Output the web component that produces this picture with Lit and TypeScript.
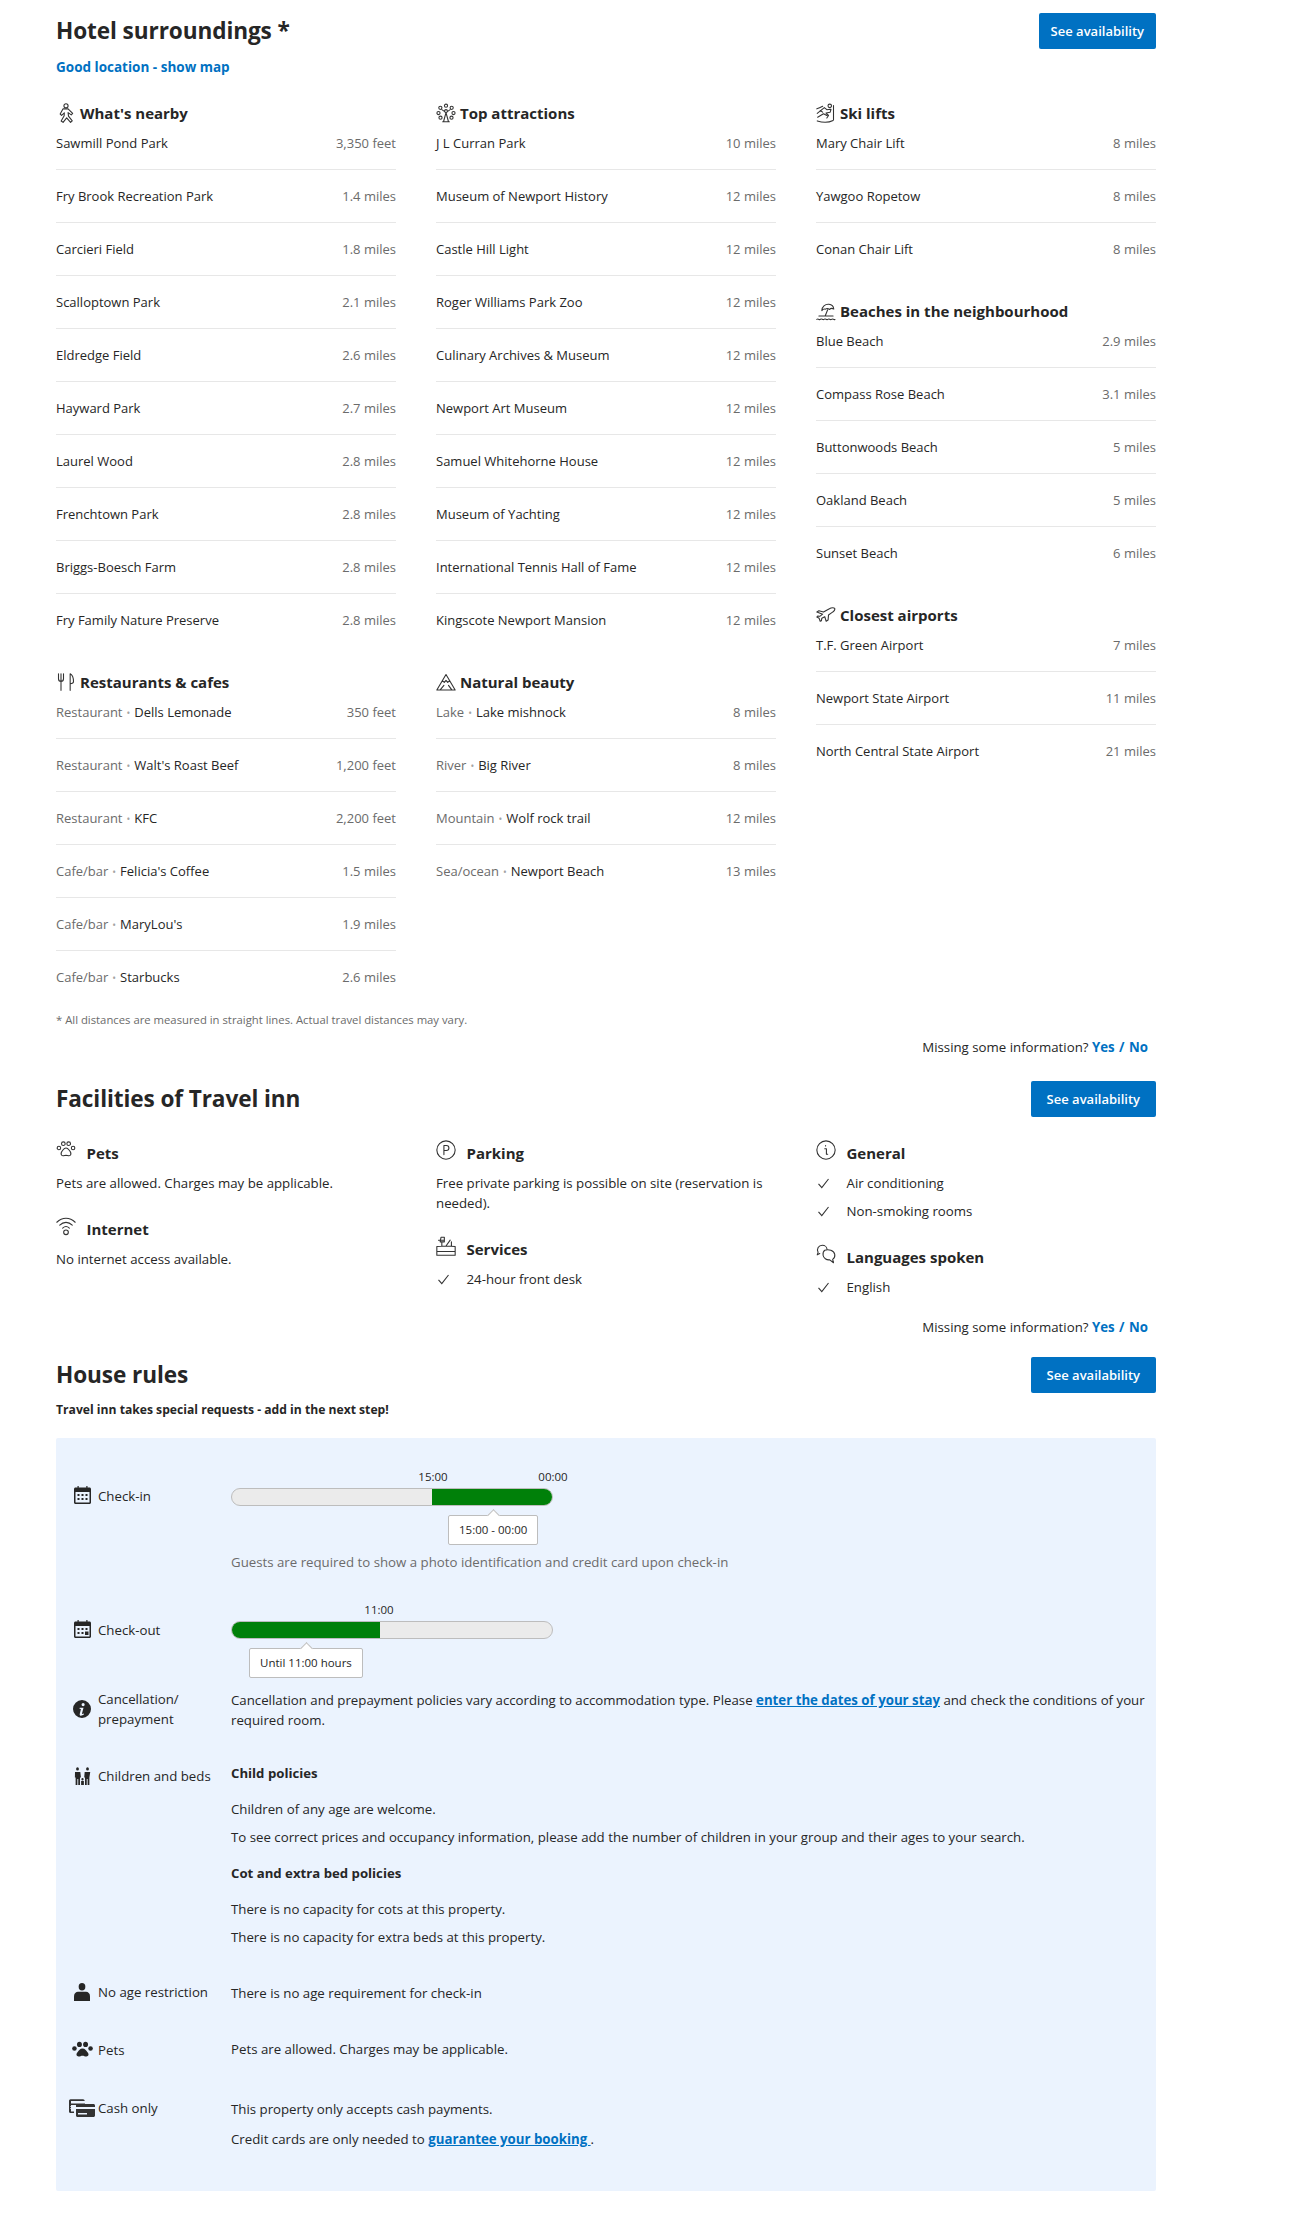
import { LitElement, html, css, svg } from "lit";
import { customElement } from "lit/decorators.js";

const line = (body: any, size = 20, box = 24) => html`<svg class="ic" width=${size} height=${size} viewBox="0 0 ${box} ${box}" fill="none" stroke="#333" stroke-width="1.3" stroke-linecap="round" stroke-linejoin="round">${body}</svg>`;
const solid = (body: any, w = 18, h = 18, vw = 24, vh = 24) => html`<svg class="ic" width=${w} height=${h} viewBox="0 0 ${vw} ${vh}" preserveAspectRatio="none" fill="#262626">${body}</svg>`;

const I = {
  walk: line(svg`<circle cx="12" cy="3.300" r="2.500"/><path d="M8.500 7h6l5.500 5.500-1.700 1.700-3.800-2.700.5 4.300 4.500 5.700-2 1.800-4.700-5.500-4.300 5.500-2.300-1.700 3.600-6.300.2-3.500-3.300 3-1.700-1.600z"/>`),
  wheel: line(svg`<circle cx="12" cy="3.200" r="1.900"/><circle cx="5.200" cy="5.800" r="1.900"/><circle cx="18.800" cy="5.800" r="1.900"/><circle cx="3" cy="12" r="1.900"/><circle cx="21" cy="12" r="1.900"/><circle cx="5.400" cy="17.600" r="1.900"/><circle cx="18.600" cy="17.600" r="1.900"/><circle cx="12" cy="9.600" r="1.700"/><path d="M9 22.500l3-11 3 11zM8 22.500h8M7 8l3 2M17 8l-3 2"/>`),
  ski: line(svg`<circle cx="16.500" cy="3.400" r="2.100"/><path d="M1.500 12.500L10 5.500 13 8l5-.5-1 3.500-5 1 3 3-2 3M2 17l7-4 4 2M21 3v17M1 7c3-1 5-2 7-3M1.500 21.500c6 2 14 2 19-.5M5 9l3 2"/>`),
  beach: line(svg`<path d="M7 11.500C7 7 11 3.500 15.500 4c3.500.4 5.500 3 5.800 5.600-2.200-1.300-4-.7-5 .6-1.600-1.400-3.500-1.600-5-.4-1.600-.6-3-.1-4.300 1.700zM14 10.500l-3 7.500M3.500 18h17"/><path d="M1 22c1.800-1.200 2.400 1.200 4.400 0s2.600 1.200 4.400 0 2.600 1.200 4.400 0 2.600 1.200 4.400 0 2.600 1.200 4.400 0" stroke-dasharray="2 .6"/>`),
  plane: line(svg`<path d="M1 8.500l2.500-1.500 5.500 1.500 6-3.500c2.500-1.300 6-2 7.500-1 .5 1.500-1 3.500-3.500 5.200L15 12l-.5 6-2.300 1.500-1.700-5.500-3.500 1.800-.5 3-1.500.7-1.200-3.500L1 14.500l1-1.200 2.500.3L8 11z"/>`),
  fork: line(svg`<path d="M3 2v6c0 2 1.200 3.200 3 3.200S9 10 9 8V2M6 2v20M17 22V2c3 1.500 4 6 4 9.500 0 1.600-1.500 2.500-4 2.500"/>`),
  mountain: line(svg`<path d="M1 21.500L12 3l11 18.500zM7.600 10.500l2.400 2 2-2.500 2 2.500 2.400-2M5 21.500l4.500-5.500M19 21.500L15 16"/>`),
  paw: line(svg`<circle cx="8.800" cy="4.400" r="2.200"/><circle cx="15.200" cy="4.400" r="2.200"/><circle cx="3.500" cy="9.600" r="2.100"/><circle cx="20.500" cy="9.600" r="2.100"/><path d="M12 9.500c-2.400 0-3.200 2-4.400 3.400C6.200 14.600 5.400 16 6.600 18c1.400 1.800 3.600.4 5.400.4s4 1.400 5.400-.4c1.200-2 .4-3.400-1-5.100C15.200 11.500 14.400 9.500 12 9.500z"/>`),
  p: line(svg`<circle cx="12" cy="12" r="11"/><path d="M9.500 17.500V6.500h3c2 0 3 1.200 3 3s-1 3-3 3h-3"/>`),
  info: line(svg`<circle cx="12" cy="12" r="11"/><path d="M10.500 10.500h2v6.500h1.500M11.500 6.700v.5"/>`),
  wifi: line(svg`<path d="M1 7.500C7.500 1.200 16.500 1.200 23 7.500M4.500 11C9 6.500 15 6.500 19.500 11M8 14.500c2.400-2.200 5.600-2.200 8 0"/><circle cx="12" cy="19.500" r="2.800"/>`),
  desk: line(svg`<path d="M1 23V12.500l5.500-.2h11l5.500.2V23zM1 18.500h22M7 12V8M12 12l5-7M6 1.500h4V7H5zM3 5h7M18.500 12V7"/>`),
  chat: line(svg`<path d="M2.500 10C.5 6 3 1.500 7.500 1.500c3.500 0 5.600 2.500 5.700 4.800M2.500 10L1.500 13l3-1.500"/><path d="M10.500 7.500c4.500-1.500 11 0 12 5 .5 3-1 5-2.500 6l1 4-4.500-3.500c-4 .5-7.500-2-8-5.500-.3-2.500.5-5 2-6z"/>`),
  check: html`<svg class="ic" width="11" height="11" viewBox="0 0 11 11" fill="none" stroke="#333" stroke-width="1.100"><path d="M.5 5.800L3.800 9.700 10.500 1"/></svg>`,
  cal: (back = false) => html`<svg class="ic cal" width="17" height="18" viewBox="0 0 17 18" fill="#262626"><path fill-rule="evenodd" d="M3.500 0h1.200v1.500h7.600V0h1.200v1.500H15.500c.8 0 1.500.7 1.500 1.500v13.500c0 .8-.7 1.500-1.500 1.500h-14C.7 18 0 17.300 0 16.500V3c0-.8.7-1.500 1.500-1.500h2zM1.500 6v10.500h14V6z"/><path d="M3.500 8h2v2h-2zM7.500 8h2v2h-2zM11.500 8h2v2h-2zM3.500 12h2v2h-2zM7.500 12h2v2h-2z"/><path d=${back ? "M11 11.500h3.500v3.500H11z" : "M11.500 12h2v2h-2z"}/></svg>`,
  infoSolid: solid(svg`<path fill-rule="evenodd" d="M12 0a12 12 0 1 1 0 24 12 12 0 0 1 0-24zM13.500 4a2 2 0 1 0 0 4.200 2 2 0 0 0 0-4.200zM9 10.200l-.4 1.500 2 .3-1.600 6.500c-.4 2 1 2.700 2.500 2.300 1.500-.3 2.500-1 3.200-1.700l-.4-1.200-1.900.6c-.4 0-.5-.3-.3-1l1.900-7.200z"/>`),
  family: solid(svg`<circle cx="4" cy="2.500" r="2.300"/><circle cx="20" cy="2.500" r="2.300"/><path d="M0 6.500h8.500l1 7.500H8v10H5.200v-8H3.800v8H1V14H-.2zM15.500 6.500H24.400L23 14v10h-2.800v-8h-1.400v8H16V14h-1.300zM12 14.500a1.800 1.800 0 1 1 0 3.600 1.800 1.800 0 0 1 0-3.600zM9.800 18.800h4.400V24H9.800z"/>`, 15, 18),
  person: solid(svg`<circle cx="12" cy="5" r="5"/><path d="M0 24v-6.500C0 13.500 3 11.500 6 11.500h12c3 0 6 2 6 6V24z"/>`, 16, 18),
  pawSolid: solid(svg`<ellipse cx="8.500" cy="4.500" rx="2.800" ry="3.500"/><ellipse cx="15.500" cy="4.500" rx="2.800" ry="3.500"/><ellipse cx="2.800" cy="10" rx="2.600" ry="2.900"/><ellipse cx="21.200" cy="10" rx="2.600" ry="2.900"/><path d="M12 10c-3 0-4 2.500-5.500 4.500C5 16.500 4.500 18.500 6 20c1.800 1.500 4-.5 6-.5s4.200 2 6 .5c1.500-1.500 1-3.500-.5-5.500C16 12.500 15 10 12 10z"/>`, 21, 18),
  cards: html`<svg class="ic" width="26" height="18" viewBox="0 0 26 18" fill="#333"><path d="M0 2c0-1 .7-1.700 1.500-1.700H14c1 0 1.700.7 1.700 1.700H2v2.500h14V6H2v6.500h3V14H1.500C.6 14 0 13.400 0 12.500z"/><path d="M1 7.500h3M1 9.500h3" stroke="#ebf2fd" stroke-width=".6"/><path d="M7 6.500c0-1 .7-1.500 1.500-1.500h16c.8 0 1.500.6 1.500 1.500V8H7zM7 10h19v6.500c0 .8-.7 1.500-1.500 1.500h-16C7.700 18 7 17.300 7 16.500zM9 14v1.500h9V14z" fill-rule="evenodd"/></svg>`,
};

type Row = { n: string; d: string; c?: string };
type Group = { icon: any; title: string; rows: Row[] };
const r = (n: string, d: string, c?: string): Row => ({ n, d, c });
const columns: Group[][] = [
  [
    { icon: I.walk, title: "What's nearby", rows: [r("Sawmill Pond Park", "3,350 feet"), r("Fry Brook Recreation Park", "1.4 miles"), r("Carcieri Field", "1.8 miles"), r("Scalloptown Park", "2.1 miles"), r("Eldredge Field", "2.6 miles"), r("Hayward Park", "2.7 miles"), r("Laurel Wood", "2.8 miles"), r("Frenchtown Park", "2.8 miles"), r("Briggs-Boesch Farm", "2.8 miles"), r("Fry Family Nature Preserve", "2.8 miles")] },
    { icon: I.fork, title: "Restaurants & cafes", rows: [r("Dells Lemonade", "350 feet", "Restaurant"), r("Walt's Roast Beef", "1,200 feet", "Restaurant"), r("KFC", "2,200 feet", "Restaurant"), r("Felicia's Coffee", "1.5 miles", "Cafe/bar"), r("MaryLou's", "1.9 miles", "Cafe/bar"), r("Starbucks", "2.6 miles", "Cafe/bar")] },
  ],
  [
    { icon: I.wheel, title: "Top attractions", rows: [r("J L Curran Park", "10 miles"), r("Museum of Newport History", "12 miles"), r("Castle Hill Light", "12 miles"), r("Roger Williams Park Zoo", "12 miles"), r("Culinary Archives & Museum", "12 miles"), r("Newport Art Museum", "12 miles"), r("Samuel Whitehorne House", "12 miles"), r("Museum of Yachting", "12 miles"), r("International Tennis Hall of Fame", "12 miles"), r("Kingscote Newport Mansion", "12 miles")] },
    { icon: I.mountain, title: "Natural beauty", rows: [r("Lake mishnock", "8 miles", "Lake"), r("Big River", "8 miles", "River"), r("Wolf rock trail", "12 miles", "Mountain"), r("Newport Beach", "13 miles", "Sea/ocean")] },
  ],
  [
    { icon: I.ski, title: "Ski lifts", rows: [r("Mary Chair Lift", "8 miles"), r("Yawgoo Ropetow", "8 miles"), r("Conan Chair Lift", "8 miles")] },
    { icon: I.beach, title: "Beaches in the neighbourhood", rows: [r("Blue Beach", "2.9 miles"), r("Compass Rose Beach", "3.1 miles"), r("Buttonwoods Beach", "5 miles"), r("Oakland Beach", "5 miles"), r("Sunset Beach", "6 miles")] },
    { icon: I.plane, title: "Closest airports", rows: [r("T.F. Green Airport", "7 miles"), r("Newport State Airport", "11 miles"), r("North Central State Airport", "21 miles")] },
  ],
];

@customElement("app-root")
export class AppRoot extends LitElement {
  static styles = css`
    :host { display: block; width: 1314px; min-height: 2213px; background: #fff; color: #262626; font-family: "Open Sans", "Noto Sans", sans-serif; font-size: 13.25px; line-height: 20px; }
    * { box-sizing: border-box; }
    .ic { display: block; flex-shrink: 0; overflow: visible; }
    .page { width: 1100px; margin-left: 56px; padding-top: 13px; }
    .head { display: flex; justify-content: space-between; align-items: center; }
    h2 { margin: 0; font-size: 22.6px; line-height: 36px; font-weight: 700; letter-spacing: -0.1px; }
    .btn { display: flex; align-items: center; height: 36px; padding: 0 12px; background: #0071c2; color: #fff; border-radius: 2px; font-weight: 600; font-size: 13px; }
    .btn.wide { padding: 0 16px; }
    .loc { margin-top: 8px; color: #0071c2; font-weight: 700; font-size: 13.5px; }
    .grid { display: grid; grid-template-columns: repeat(3, 340px); column-gap: 40px; }
    .surround { margin-top: 24px; font-size: 13px; }
    .group { margin-bottom: 24px; }
    .group:last-child { margin-bottom: 0; }
    h3 { margin: 0 0 8px; display: flex; align-items: center; gap: 4px; height: 24px; font-size: 15px; font-weight: 700; line-height: 24px; }
    .row { display: flex; justify-content: space-between; padding: 16px 0; border-bottom: 1px solid #e7e7e7; }
    .row:first-of-type { padding-top: 0; }
    .row:last-child { border-bottom: none; }
    .dist, .cat { color: #6b6b6b; }
    .dot { color: #a3a3a3; margin: 0 4px; font-size: 10px; line-height: 0; }
    .note { margin-top: 9px; font-size: 11.3px; line-height: 16px; color: #6b6b6b; }
    .missing { margin-top: 9px; padding-right: 8px; text-align: right; }
    .missing b { color: #0071c2; font-weight: 700; }
    .missing .slash { margin: 0 1px; }
    .facilities { margin-top: 24px; }
    .head.fac { margin-top: 24px; }
    .fgroup { margin-bottom: 24px; }
    .fgroup:last-child { margin-bottom: 0; }
    h4 { margin: 0 0 8px; display: flex; align-items: center; height: 24px; font-size: 15px; font-weight: 700; }
    h4 .slot { width: 30.5px; flex-shrink: 0; margin-top: -6px; }
    .item { display: flex; align-items: center; }
    .item + .item { margin-top: 8px; }
    .item .chk { width: 30.5px; padding-left: 2px; flex-shrink: 0; }
    .miss2 { margin-top: 20px; }
    .head.rules { margin-top: 20px; }
    .sub { margin-top: 7px; font-weight: 700; font-size: 12.15px; }
    .panel { margin-top: 18px; height: 753px; padding-top: 31px; background: #ebf3fe; border-radius: 2px; }
    .rule { display: flex; }
    .lab { width: 175px; flex-shrink: 0; display: flex; align-items: center; }
    .slot2 { width: 24px; margin: 0 4px 0 14px; flex-shrink: 0; display: flex; justify-content: center; }
    .slot2 .ic { margin: 0 -2px; }
    .slot2 .cal { margin-top: -2px; }
    .lab.a { height: 20px; margin-top: 17px; }
    .r-out .lab.a { margin-top: 18px; }
    .body { flex: 1; min-width: 0; }
    .scale { position: relative; height: 16px; width: 322px; font-size: 11.5px; line-height: 16px; }
    .scale span { position: absolute; top: 0; transform: translateX(-50%); }
    .bar { position: relative; margin-top: 3px; width: 322px; height: 18px; background: #ebebeb; border: 1px solid #bdbdbd; border-radius: 9px; overflow: hidden; }
    .fill { position: absolute; top: -1px; bottom: -1px; background: #008009; }
    .tipwrap { display: block; height: 39px; }
    .tip { position: relative; display: inline-flex; align-items: center; height: 30px; margin-top: 9px; padding: 0 10px; background: #fff; border: 1px solid #bdbdbd; border-radius: 2px; font-size: 11.5px; }
    .tip::before { content: ""; position: absolute; left: 50%; top: -5px; width: 8px; height: 8px; margin-left: -4px; background: #fff; border-left: 1px solid #bdbdbd; border-top: 1px solid #bdbdbd; transform: rotate(45deg); }
    .guest { margin-top: 7px; color: #6b6b6b; }
    .r-out { margin-top: 30px; }
    .r-can { margin-top: 12px; }
    .r-can .lab { margin-top: -1px; height: 40px; }
    .r-kids { margin-top: 33px; }
    .r-kids .lab, .r-age .lab, .r-pets .lab, .r-cash .lab { height: 20px; }
    .r-kids .lab { margin-top: 3px; }
    .r-age { margin-top: 36px; }
    .r-age .lab { margin-top: -1px; }
    .r-pets { margin-top: 36px; }
    .r-pets .lab { margin-top: 1px; }
    .r-cash { margin-top: 39px; }
    .r-cash .lab { margin-top: -1px; }
    .body p { margin: 0; }
    .body p.t { font-weight: 700; font-size: 13.2px; }
    .body p.mt8 { margin-top: 8px; }
    .body p.mt10 { margin-top: 10px; }
    .body p.mt16 { margin-top: 16px; }
    a { color: #0071c2; font-weight: 700; text-decoration: underline; }
  `;

  private group(g: Group) {
    return html`<div class="group">
      <h3>${g.icon}<span>${g.title}</span></h3>
      ${g.rows.map((x) => html`<div class="row"><span>${x.c ? html`<span class="cat">${x.c}</span><span class="dot">•</span>` : ""}${x.n}</span><span class="dist">${x.d}</span></div>`)}
    </div>`;
  }

  private checks(items: string[]) {
    return items.map((i) => html`<div class="item"><span class="chk">${I.check}</span><span>${i}</span></div>`);
  }

  private lab(icon: any, text: any, extra = "") {
    return html`<div class="lab ${extra}"><span class="slot2">${icon}</span><span>${text}</span></div>`;
  }

  private scale(labels: [string, number][], from: number, to: number) {
    return html`<div class="scale">${labels.map(([t, p]) => html`<span style="left:${p}px">${t}</span>`)}</div>
      <div class="bar"><div class="fill" style="left:${from}px;width:${to - from}px"></div></div>`;
  }

  render() {
    return html`<div class="page">
      <div class="head"><h2>Hotel surroundings *</h2><div class="btn">See availability</div></div>
      <div class="loc">Good location - show map</div>
      <div class="grid surround">${columns.map((c) => html`<div>${c.map((g) => this.group(g))}</div>`)}</div>
      <div class="note">* All distances are measured in straight lines. Actual travel distances may vary.</div>
      <div class="missing">Missing some information? <b>Yes</b> <b class="slash">/</b> <b>No</b></div>

      <div class="head fac"><h2>Facilities of Travel inn</h2><div class="btn wide">See availability</div></div>
      <div class="grid facilities">
        <div>
          <div class="fgroup"><h4><span class="slot">${I.paw}</span>Pets</h4><div>Pets are allowed. Charges may be applicable.</div></div>
          <div class="fgroup"><h4><span class="slot">${I.wifi}</span>Internet</h4><div>No internet access available.</div></div>
        </div>
        <div>
          <div class="fgroup"><h4><span class="slot">${I.p}</span>Parking</h4><div>Free private parking is possible on site (reservation is<br />needed).</div></div>
          <div class="fgroup"><h4><span class="slot">${I.desk}</span>Services</h4>${this.checks(["24-hour front desk"])}</div>
        </div>
        <div>
          <div class="fgroup"><h4><span class="slot">${I.info}</span>General</h4>${this.checks(["Air conditioning", "Non-smoking rooms"])}</div>
          <div class="fgroup"><h4><span class="slot">${I.chat}</span>Languages spoken</h4>${this.checks(["English"])}</div>
        </div>
      </div>
      <div class="missing miss2">Missing some information? <b>Yes</b> <b class="slash">/</b> <b>No</b></div>

      <div class="head rules"><h2>House rules</h2><div class="btn wide">See availability</div></div>
      <div class="sub">Travel inn takes special requests - add in the next step!</div>
      <div class="panel">
        <div class="rule">
          ${this.lab(I.cal(), "Check-in", "a")}
          <div class="body">
            ${this.scale([["15:00", 202], ["00:00", 322]], 200, 322)}
            <div class="tipwrap" style="padding-left:217px"><span class="tip">15:00 - 00:00</span></div>
            <div class="guest">Guests are required to show a photo identification and credit card upon check-in</div>
          </div>
        </div>
        <div class="rule r-out">
          ${this.lab(I.cal(true), "Check-out", "a")}
          <div class="body">
            ${this.scale([["11:00", 148]], 0, 148)}
            <div class="tipwrap" style="padding-left:18px"><span class="tip">Until 11:00 hours</span></div>
          </div>
        </div>
        <div class="rule r-can">
          ${this.lab(I.infoSolid, html`Cancellation/<br />prepayment`)}
          <div class="body">Cancellation and prepayment policies vary according to accommodation type. Please <a>enter the dates of your stay</a> and check the conditions of your<br />required room.</div>
        </div>
        <div class="rule r-kids">
          ${this.lab(I.family, "Children and beds")}
          <div class="body">
            <p class="t">Child policies</p>
            <p class="mt16">Children of any age are welcome.</p>
            <p class="mt8">To see correct prices and occupancy information, please add the number of children in your group and their ages to your search.</p>
            <p class="t mt16">Cot and extra bed policies</p>
            <p class="mt16">There is no capacity for cots at this property.</p>
            <p class="mt8">There is no capacity for extra beds at this property.</p>
          </div>
        </div>
        <div class="rule r-age">${this.lab(I.person, "No age restriction")}<div class="body">There is no age requirement for check-in</div></div>
        <div class="rule r-pets">${this.lab(I.pawSolid, "Pets")}<div class="body">Pets are allowed. Charges may be applicable.</div></div>
        <div class="rule r-cash">
          ${this.lab(I.cards, "Cash only")}
          <div class="body">
            <p>This property only accepts cash payments.</p>
            <p class="mt10">Credit cards are only needed to <a>guarantee your booking </a>.</p>
          </div>
        </div>
      </div>
    </div>`;
  }
}
